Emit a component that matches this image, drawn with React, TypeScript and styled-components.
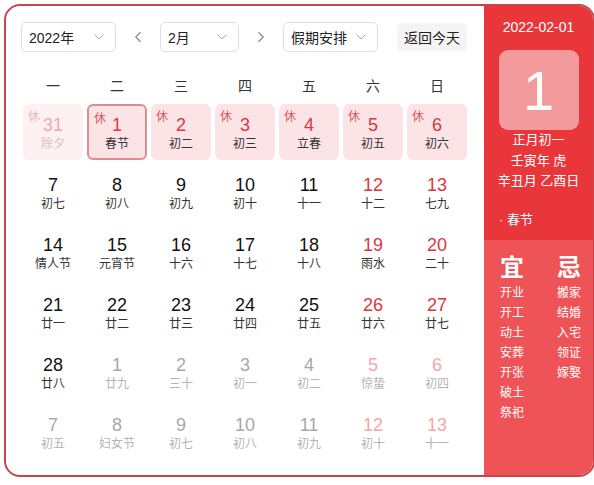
import React from 'react'
import styled, { createGlobalStyle } from 'styled-components'
import { ChevronDown, ChevronLeft, ChevronRight } from 'lucide-react'

type Day = {
  n: number
  lunar: string
  rest?: boolean
  weekend?: boolean
  other?: boolean
  selected?: boolean
}

const weekdays = ['一', '二', '三', '四', '五', '六', '日']

const days: Day[] = [
  { n: 31, lunar: '除夕', rest: true, other: true },
  { n: 1, lunar: '春节', rest: true, selected: true },
  { n: 2, lunar: '初二', rest: true },
  { n: 3, lunar: '初三', rest: true },
  { n: 4, lunar: '立春', rest: true },
  { n: 5, lunar: '初五', rest: true, weekend: true },
  { n: 6, lunar: '初六', rest: true, weekend: true },
  { n: 7, lunar: '初七' },
  { n: 8, lunar: '初八' },
  { n: 9, lunar: '初九' },
  { n: 10, lunar: '初十' },
  { n: 11, lunar: '十一' },
  { n: 12, lunar: '十二', weekend: true },
  { n: 13, lunar: '七九', weekend: true },
  { n: 14, lunar: '情人节' },
  { n: 15, lunar: '元宵节' },
  { n: 16, lunar: '十六' },
  { n: 17, lunar: '十七' },
  { n: 18, lunar: '十八' },
  { n: 19, lunar: '雨水', weekend: true },
  { n: 20, lunar: '二十', weekend: true },
  { n: 21, lunar: '廿一' },
  { n: 22, lunar: '廿二' },
  { n: 23, lunar: '廿三' },
  { n: 24, lunar: '廿四' },
  { n: 25, lunar: '廿五' },
  { n: 26, lunar: '廿六', weekend: true },
  { n: 27, lunar: '廿七', weekend: true },
  { n: 28, lunar: '廿八' },
  { n: 1, lunar: '廿九', other: true },
  { n: 2, lunar: '三十', other: true },
  { n: 3, lunar: '初一', other: true },
  { n: 4, lunar: '初二', other: true },
  { n: 5, lunar: '惊蛰', other: true, weekend: true },
  { n: 6, lunar: '初四', other: true, weekend: true },
  { n: 7, lunar: '初五', other: true },
  { n: 8, lunar: '妇女节', other: true },
  { n: 9, lunar: '初七', other: true },
  { n: 10, lunar: '初八', other: true },
  { n: 11, lunar: '初九', other: true },
  { n: 12, lunar: '初十', other: true, weekend: true },
  { n: 13, lunar: '十一', other: true, weekend: true }
]

const good = ['开业', '开工', '动土', '安葬', '开张', '破土', '祭祀']
const bad = ['搬家', '结婚', '入宅', '领证', '嫁娶']

function numColor(d: Day) {
  if (d.rest && d.other) return '#f2a9ae'
  if (d.rest) return '#d9363e'
  if (d.other && d.weekend) return '#f1a7ad'
  if (d.other) return '#a8a8a8'
  if (d.weekend) return '#d9363e'
  return '#111'
}

function lunarColor(d: Day) {
  if (d.rest && d.other) return '#d9c0c2'
  if (d.other) return '#b4b4b4'
  return '#333'
}

export default function App() {
  return (
    <>
      <GlobalStyle />
      <Frame>
        <Main>
          <Toolbar>
            <Select $w={95}>
              2022年
              <DownIcon />
            </Select>
            <Arrow>
              <ChevronLeft size={18} strokeWidth={1.5} />
            </Arrow>
            <Select $w={79}>
              2月
              <DownIcon />
            </Select>
            <Arrow>
              <ChevronRight size={18} strokeWidth={1.5} />
            </Arrow>
            <Select $w={95}>
              假期安排
              <DownIcon />
            </Select>
            <TodayButton>返回今天</TodayButton>
          </Toolbar>
          <WeekRow>
            {weekdays.map(w => (
              <WeekDay key={w}>{w}</WeekDay>
            ))}
          </WeekRow>
          <Grid>
            {days.map((d, i) => (
              <Cell key={i} $rest={!!d.rest} $faded={!!(d.rest && d.other)} $selected={!!d.selected}>
                {d.rest && <RestTag $faded={!!d.other}>休</RestTag>}
                <Num $color={numColor(d)}>{d.n}</Num>
                <Lunar $color={lunarColor(d)}>{d.lunar}</Lunar>
              </Cell>
            ))}
          </Grid>
        </Main>
        <Side>
          <SideTop>
            <DateText>2022-02-01</DateText>
            <BigDay>1</BigDay>
            <InfoLine>正月初一</InfoLine>
            <InfoLine>壬寅年 虎</InfoLine>
            <InfoLine>辛丑月 乙酉日</InfoLine>
            <Festival>· 春节</Festival>
          </SideTop>
          <SideBottom>
            <Column>
              <ColTitle>宜</ColTitle>
              {good.map(g => (
                <ColItem key={g}>{g}</ColItem>
              ))}
            </Column>
            <Column>
              <ColTitle>忌</ColTitle>
              {bad.map(b => (
                <ColItem key={b}>{b}</ColItem>
              ))}
            </Column>
          </SideBottom>
        </Side>
      </Frame>
    </>
  )
}

const GlobalStyle = createGlobalStyle`
  body {
    margin: 0;
    background: #fff;
    font-family: "Liberation Sans", "Noto Sans CJK SC", sans-serif;
  }
`

const Frame = styled.div`
  margin: 4px 0 0 4px;
  width: 591px;
  height: 473px;
  box-sizing: border-box;
  border: 2px solid #c9454c;
  border-radius: 16px;
  overflow: hidden;
  display: flex;
  background: #fff;
`

const Main = styled.div`
  width: 478px;
  padding: 16px 0 0 15px;
  box-sizing: border-box;
  display: flex;
  flex-direction: column;
`

const Toolbar = styled.div`
  display: flex;
  align-items: center;
  height: 30px;
  padding-right: 17px;
`

const Select = styled.div<{ $w: number }>`
  width: ${p => p.$w}px;
  height: 30px;
  box-sizing: border-box;
  border: 1px solid #dcdfe6;
  border-radius: 5px;
  display: flex;
  align-items: center;
  justify-content: space-between;
  padding: 0 8px 0 7px;
  font-size: 14px;
  color: #222;
`

const DownIcon = styled(ChevronDown).attrs({ size: 16, strokeWidth: 1.3 })`
  color: #999;
`

const Arrow = styled.div`
  width: 44px;
  display: flex;
  justify-content: center;
  color: #888;
`

const TodayButton = styled.div`
  margin-left: auto;
  height: 28px;
  padding: 0 7px;
  display: flex;
  align-items: center;
  background: #f4f4f5;
  border-radius: 4px;
  font-size: 14px;
  color: #222;
`

const WeekRow = styled.div`
  margin: 16px 0 0 2px;
  display: grid;
  grid-template-columns: repeat(7, 60px);
  column-gap: 4px;
  height: 36px;
`

const WeekDay = styled.div`
  text-align: center;
  line-height: 36px;
  font-size: 14px;
  color: #333;
`

const Grid = styled.div`
  margin-left: 2px;
  display: grid;
  grid-template-columns: repeat(7, 60px);
  grid-auto-rows: 56px;
  gap: 4px;
`

const Cell = styled.div<{ $rest: boolean; $faded: boolean; $selected: boolean }>`
  position: relative;
  box-sizing: border-box;
  border-radius: 6px;
  display: flex;
  flex-direction: column;
  align-items: center;
  background: ${p => (p.$faded ? '#fdf1f2' : p.$rest ? '#fce4e6' : 'transparent')};
  border: ${p => (p.$selected ? '2px solid #e38a90' : 'none')};
  padding-top: ${p => (p.$selected ? '9px' : '11px')};
`

const RestTag = styled.span<{ $faded: boolean }>`
  position: absolute;
  left: 5px;
  top: 3px;
  font-size: 12px;
  color: ${p => (p.$faded ? '#f2b6ba' : '#e0555c')};
`

const Num = styled.div<{ $color: string }>`
  font-size: 18px;
  line-height: 21px;
  color: ${p => p.$color};
`

const Lunar = styled.div<{ $color: string }>`
  font-size: 12px;
  line-height: 16px;
  color: ${p => p.$color};
`

const Side = styled.div`
  flex: 1;
  display: flex;
  flex-direction: column;
  color: #fff;
`

const SideTop = styled.div`
  background: #e8363b;
  height: 234px;
  box-sizing: border-box;
  padding-top: 11px;
  display: flex;
  flex-direction: column;
  align-items: center;
`

const DateText = styled.div`
  font-size: 14px;
  line-height: 20px;
`

const BigDay = styled.div`
  margin-top: 13px;
  width: 80px;
  height: 80px;
  border-radius: 9px;
  background: #f29a9c;
  display: flex;
  align-items: center;
  justify-content: center;
  font-size: 56px;
  font-family: "Liberation Sans", sans-serif;
`

const InfoLine = styled.div`
  font-size: 13px;
  line-height: 20.5px;
  &:first-of-type {
    margin-top: 6px;
  }
`

const Festival = styled.div`
  align-self: flex-start;
  margin: 19px 0 0 15px;
  font-size: 13px;
  line-height: 18px;
`

const SideBottom = styled.div`
  flex: 1;
  background: #ee5457;
  padding: 14px 0 0 16px;
  display: flex;
  gap: 31px;
`

const Column = styled.div`
  display: flex;
  flex-direction: column;
  width: 26px;
`

const ColTitle = styled.div`
  font-size: 24px;
  line-height: 28px;
  font-weight: bold;
  margin-bottom: 1px;
`

const ColItem = styled.div`
  font-size: 12px;
  line-height: 20px;
  white-space: nowrap;
`
